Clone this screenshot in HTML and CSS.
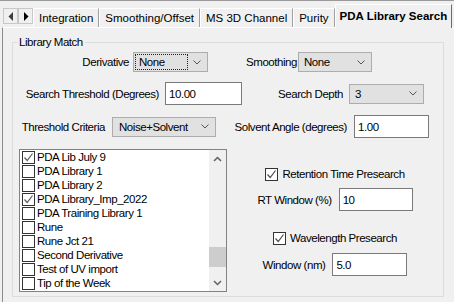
FILE: index.html
```html
<!DOCTYPE html>
<html>

<head>
    <title>PDA Library Search</title>
    <link rel="stylesheet" href="styles.css">
</head>

<body>
    <!-- tab strip -->
    <div class="tab-bar">
        <div class="scroll-btns">
            <span class="scroll-btn">
                <svg width="6" height="9" viewBox="0 0 6 9"><polygon points="5,0 5,9 0.5,4.5" fill="#3c3c3c" /></svg>
            </span>
            <span class="scroll-btn">
                <svg width="6" height="9" viewBox="0 0 6 9"><polygon points="1,0 1,9 5.5,4.5" fill="#000" /></svg>
            </span>
        </div>
        <div class="tab">Integration</div>
        <div class="tab">Smoothing/Offset</div>
        <div class="tab">MS 3D Channel</div>
        <div class="tab">Purity</div>
        <div class="tab active">PDA Library Search</div>
    </div>

    <div class="panel">
        <fieldset class="group">
            <legend>Library Match</legend>

            <div class="form-row row-deriv">
                <span class="field-label lbl-deriv">Derivative</span>
                <div class="combo combo-deriv">
                    <span class="combo-value focused">None</span>
                    <svg class="chevron" width="8" height="5" viewBox="0 0 8 5"><polyline points="0.5,0.5 4,4 7.5,0.5" fill="none" stroke="#555" stroke-width="1" /></svg>
                </div>
                <span class="field-label lbl-smooth">Smoothing</span>
                <div class="combo combo-smooth">
                    <span class="combo-value">None</span>
                    <svg class="chevron" width="8" height="5" viewBox="0 0 8 5"><polyline points="0.5,0.5 4,4 7.5,0.5" fill="none" stroke="#555" stroke-width="1" /></svg>
                </div>
            </div>

            <div class="form-row row-thresh">
                <span class="field-label lbl-thresh">Search Threshold (Degrees)</span>
                <input class="text-input input-thresh" type="text" value="10.00">
                <span class="field-label lbl-depth">Search Depth</span>
                <div class="combo combo-depth">
                    <span class="combo-value">3</span>
                    <svg class="chevron" width="8" height="5" viewBox="0 0 8 5"><polyline points="0.5,0.5 4,4 7.5,0.5" fill="none" stroke="#555" stroke-width="1" /></svg>
                </div>
            </div>

            <div class="form-row row-criteria">
                <span class="field-label lbl-criteria">Threshold Criteria</span>
                <div class="combo combo-criteria">
                    <span class="combo-value">Noise+Solvent</span>
                    <svg class="chevron" width="8" height="5" viewBox="0 0 8 5"><polyline points="0.5,0.5 4,4 7.5,0.5" fill="none" stroke="#555" stroke-width="1" /></svg>
                </div>
                <span class="field-label lbl-solvent">Solvent Angle (degrees)</span>
                <input class="text-input input-solvent" type="text" value="1.00">
            </div>

            <div class="lower">
                <!-- library list -->
                <div class="listbox">
                    <div class="list-items">
                        <div class="list-item"><span class="check checked"><svg width="11" height="11" viewBox="0 0 11 11"><polyline points="1.5,5.5 4.2,8.5 9.5,1.5" fill="none" stroke="#5a5a5a" stroke-width="1.2" /></svg></span>PDA Lib July 9</div>
                        <div class="list-item"><span class="check"></span>PDA Library 1</div>
                        <div class="list-item"><span class="check"></span>PDA Library 2</div>
                        <div class="list-item"><span class="check checked"><svg width="11" height="11" viewBox="0 0 11 11"><polyline points="1.5,5.5 4.2,8.5 9.5,1.5" fill="none" stroke="#5a5a5a" stroke-width="1.2" /></svg></span>PDA Library_Imp_2022</div>
                        <div class="list-item"><span class="check"></span>PDA Training Library 1</div>
                        <div class="list-item"><span class="check"></span>Rune</div>
                        <div class="list-item"><span class="check"></span>Rune Jct 21</div>
                        <div class="list-item"><span class="check"></span>Second Derivative</div>
                        <div class="list-item"><span class="check"></span>Test of UV import</div>
                        <div class="list-item"><span class="check"></span>Tip of the Week</div>
                    </div>
                    <div class="scrollbar">
                        <span class="sb-btn"><svg width="9" height="6" viewBox="0 0 9 6"><polyline points="1,5 4.5,1.5 8,5" fill="none" stroke="#606060" stroke-width="1.5" /></svg></span>
                        <div class="sb-track"><div class="sb-thumb"></div></div>
                        <span class="sb-btn"><svg width="9" height="6" viewBox="0 0 9 6"><polyline points="1,1 4.5,4.5 8,1" fill="none" stroke="#606060" stroke-width="1.5" /></svg></span>
                    </div>
                </div>

                <!-- presearch options -->
                <div class="presearch">
                    <div class="check-row rt-check"><span class="check checked"><svg width="11" height="11" viewBox="0 0 11 11"><polyline points="1.5,5.5 4.2,8.5 9.5,1.5" fill="none" stroke="#4a4a4a" stroke-width="1.2" /></svg></span>Retention Time Presearch</div>
                    <div class="field-row rt-field"><span>RT Window (%)</span><input class="text-input input-rt" type="text" value="10"></div>
                    <div class="check-row wl-check"><span class="check checked"><svg width="11" height="11" viewBox="0 0 11 11"><polyline points="1.5,5.5 4.2,8.5 9.5,1.5" fill="none" stroke="#4a4a4a" stroke-width="1.2" /></svg></span>Wavelength Presearch</div>
                    <div class="field-row wl-field"><span>Window (nm)</span><input class="text-input input-wl" type="text" value="5.0"></div>
                </div>
            </div>
        </fieldset>
    </div>
</body>

</html>
```

FILE: styles.css
```css
body {
    margin: 0;
    width: 454px;
    height: 302px;
    overflow: hidden;
    background-color: #f0f0f0;
    font-family: "Liberation Sans", Arial, sans-serif;
    font-size: 11.5px;
    letter-spacing: -0.45px;
    color: #000;
}

/* 选项卡 */
.tab-bar {
    display: flex;
    align-items: flex-end;
    height: 27px;
    padding-left: 3px;
    box-sizing: border-box;
    border-top: 1px solid #9a9a9a;
    letter-spacing: 0;
}

.scroll-btns {
    display: flex;
    align-self: flex-start;
    margin-top: 7px;
}

.scroll-btn {
    display: flex;
    align-items: center;
    justify-content: center;
    width: 15px;
    height: 16px;
    box-sizing: border-box;
    border: 1px solid #c8c8c8;
    background-color: #f0f0f0;
}

.tab {
    height: 19px;
    line-height: 18px;
    padding: 0 5px;
    box-sizing: border-box;
    border-top: 1px solid #fff;
    border-left: 1px solid #fff;
    border-right: 1px solid #a0a0a0;
    white-space: nowrap;
}

.tab.active {
    position: relative;
    height: 24px;
    line-height: 22px;
    margin-bottom: -1px;
    padding: 0 4px;
    font-weight: bold;
    background-color: #f0f0f0;
    border-right-color: #6a6a6a;
}

.panel {
    height: 275px;
    margin-left: 2px;
    border-top: 1px solid #fff;
    border-left: 1px solid #8c8c8c;
    box-sizing: border-box;
}

/* 分组框 */
.group {
    width: 432px;
    margin: 7px 0 0 9px;
    padding: 0 0 4px 0;
    box-sizing: border-box;
    border: 1px solid #dcdcdc;
    min-width: 0;
}

.group legend {
    margin-left: 4px;
    padding: 0 2px;
    line-height: 14px;
}

.form-row {
    display: flex;
    align-items: center;
    height: 23px;
    white-space: nowrap;
}

.row-deriv {
    height: 20px;
    margin-top: 3px;
}

.row-thresh,
.row-criteria {
    margin-top: 10px;
}

.field-label {
    text-align: right;
}

.lbl-deriv { width: 116px; margin-right: 4px; }
.lbl-smooth { width: 89px; margin-right: 1px; }
.lbl-thresh { width: 146px; margin-right: 6px; }
.lbl-depth { width: 101px; margin-right: 6px; }
.lbl-criteria { width: 92px; margin-right: 7px; }
.lbl-solvent { width: 131px; margin-right: 7px; }

/* 下拉框 */
.combo {
    display: flex;
    align-items: center;
    height: 20px;
    box-sizing: border-box;
    border: 1px solid #adadad;
    background-color: #e1e1e1;
    padding: 0 6px 0 1px;
}

.combo-value {
    flex: 1;
    padding: 0 3px;
    line-height: 14px;
    border: 1px solid transparent;
}

.combo-value.focused {
    border: 1px dotted #222;
    margin-right: 5px;
}

.chevron {
    flex: none;
}

.combo-deriv { width: 75px; }
.combo-smooth { width: 74px; }
.combo-depth { width: 75px; }
.combo-criteria { width: 104px; padding-left: 2px; }

.text-input {
    height: 23px;
    box-sizing: border-box;
    border: 1px solid #7a7a7a;
    background-color: #fff;
    padding: 0 3px;
    margin: 0;
    font-family: inherit;
    font-size: 11.5px;
    letter-spacing: -0.45px;
    color: #000;
    outline: none;
}

.input-thresh { width: 77px; }
.input-solvent { width: 75px; }
.input-rt { width: 74px; }
.input-wl { width: 75px; }

/* 列表 */
.lower {
    display: flex;
    margin-top: 11px;
}

.listbox {
    display: flex;
    width: 208px;
    height: 143px;
    margin-left: 6px;
    box-sizing: border-box;
    border: 1px solid #828282;
    background-color: #fff;
}

.list-items {
    flex: 1;
    padding-left: 2px;
    overflow: hidden;
}

.list-item {
    display: flex;
    align-items: center;
    gap: 2px;
    height: 14px;
    white-space: nowrap;
}

.check {
    display: inline-flex;
    align-items: center;
    justify-content: center;
    flex: none;
    width: 13px;
    height: 13px;
    box-sizing: border-box;
    border: 1px solid #333;
    background-color: #fff;
}

.scrollbar {
    display: flex;
    flex-direction: column;
    width: 17px;
    background-color: #f0f0f0;
}

.sb-btn {
    display: flex;
    align-items: center;
    justify-content: center;
    height: 17px;
}

.sb-track {
    flex: 1;
}

.sb-thumb {
    height: 20px;
    margin-top: 80px;
    background-color: #cdcdcd;
}

/* 预搜索 */
.presearch {
    flex: 1;
    display: flex;
    flex-direction: column;
    align-items: center;
}

.check-row {
    display: flex;
    align-items: center;
    gap: 4px;
    height: 16px;
}

.field-row {
    display: flex;
    align-items: center;
    gap: 7px;
}

.rt-check { margin-top: 17px; }
.rt-field { margin-top: 6px; }
.wl-check { margin-top: 19px; }
.wl-field { margin-top: 7px; }
```
